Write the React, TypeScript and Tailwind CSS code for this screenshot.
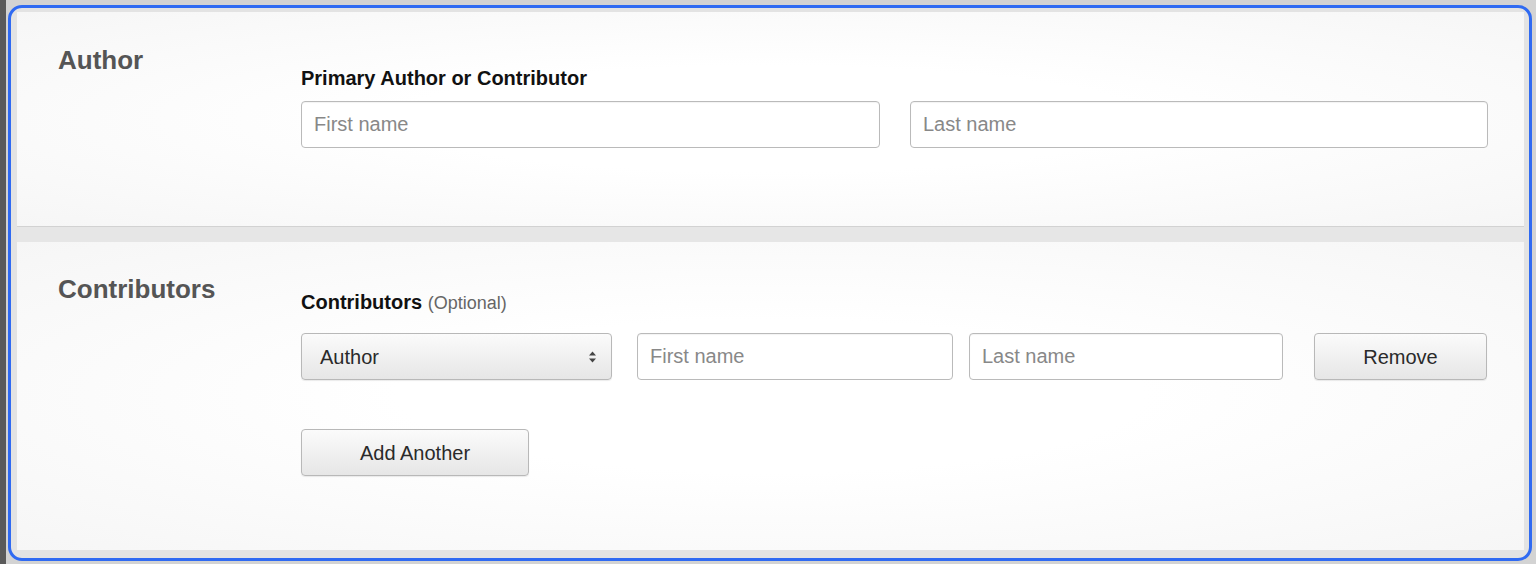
import React from "react";

function TextInput({ placeholder, className }: { placeholder: string; className: string }) {
  return (
    <input
      type="text"
      placeholder={placeholder}
      className={`h-[47px] rounded-[4px] border-[1.5px] border-[#bababa] bg-white px-[12px] text-[20px] text-[#222] placeholder:text-[#888] shadow-[inset_0_1px_1px_rgba(0,0,0,0.05)] outline-none ${className}`}
    />
  );
}

function Chevrons() {
  return (
    <svg width="9" height="14" viewBox="0 0 9 14" className="text-[#444]">
      <path d="M4.5 1.5 L8 5.5 L1 5.5 Z" fill="currentColor" />
      <path d="M4.5 12.5 L8 8.5 L1 8.5 Z" fill="currentColor" />
    </svg>
  );
}

const btn =
  "h-[47px] rounded-[4px] border-[1.5px] border-[#b8b8b8] bg-[linear-gradient(#fbfbfb,#e6e6e6)] text-[20px] text-[#2a2a2a] shadow-[0_1px_1px_rgba(0,0,0,0.08)]";

export default function App() {
  return (
    <div
      className="flex h-[564px] w-[1536px] bg-[#d3d3d3] pb-[3px] pl-[8px] pr-[4px] pt-[5px] shadow-[inset_6px_0_0_#5a5a5a]"
      style={{ fontFamily: '"Liberation Sans", Arial, sans-serif' }}
    >
      <div className="flex flex-1 flex-col overflow-hidden rounded-[14px] border-[3px] border-[#2f6af2] bg-[#e3e3e3] pb-[8px] pl-[6px] pr-[5px] pt-[4px]">
        {/* Author panel */}
        <div className="flex h-[215px] border-b border-[#d2d2d2] bg-[radial-gradient(ellipse_at_center,#ffffff_35%,#f6f6f6_100%)] pl-[41px] pr-[36px] pt-[33px]">
          <div className="w-[243px] shrink-0">
            <h2 className="text-[26px] font-bold leading-[30px] text-[#555]">Author</h2>
          </div>
          <div className="flex-1 pt-[21px]">
            <div className="text-[20px] font-bold leading-[24px] text-[#111]">Primary Author or Contributor</div>
            <div className="mt-[11px] flex gap-[30px]">
              <TextInput placeholder="First name" className="w-[579px]" />
              <TextInput placeholder="Last name" className="w-[578px]" />
            </div>
          </div>
        </div>
        {/* Separator band */}
        <div className="h-[15px] bg-[#e6e6e6]" />
        {/* Contributors panel */}
        <div className="flex flex-1 bg-[radial-gradient(ellipse_at_center,#ffffff_35%,#f6f6f6_100%)] pl-[41px] pr-[36px] pt-[32px]">
          <div className="w-[243px] shrink-0">
            <h2 className="text-[26px] font-bold leading-[30px] text-[#555]">Contributors</h2>
          </div>
          <div className="flex-1 pt-[16px]">
            <div className="text-[20px] leading-[24px] text-[#111]">
              <span className="font-bold">Contributors</span>{" "}
              <span className="text-[18px] text-[#666]">(Optional)</span>
            </div>
            <div className="mt-[18px] flex items-center">
              <div className={`${btn} flex h-[46px] w-[311px] items-center justify-between pl-[18px] pr-[14px]`}>
                <span className="text-[#2a2a2a]">Author</span>
                <Chevrons />
              </div>
              <TextInput placeholder="First name" className="ml-[25px] h-[46px] w-[316px]" />
              <TextInput placeholder="Last name" className="ml-[16px] h-[46px] w-[314px]" />
              <button className={`${btn} ml-[31px] h-[46px] w-[173px]`}>Remove</button>
            </div>
            <button className={`${btn} mt-[49px] w-[228px]`}>Add Another</button>
          </div>
        </div>
      </div>
    </div>
  );
}
